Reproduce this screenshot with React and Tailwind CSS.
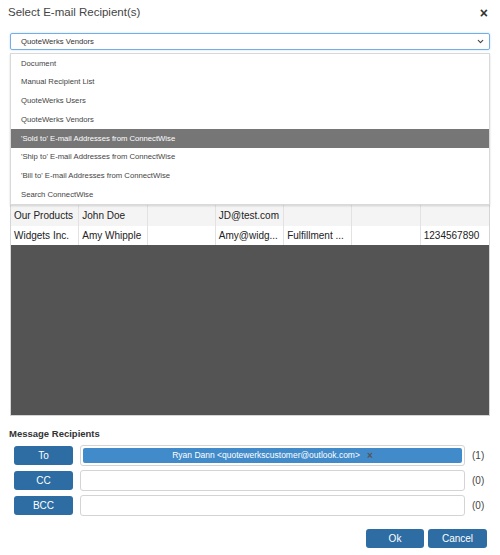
import { ChevronDown } from 'lucide-react'

const options = [
  'Document',
  'Manual Recipient List',
  'QuoteWerks Users',
  'QuoteWerks Vendors',
  "'Sold to' E-mail Addresses from ConnectWise",
  "'Ship to' E-mail Addresses from ConnectWise",
  "'Bill to' E-mail Addresses from ConnectWise",
  'Search ConnectWise',
]

const rows = [
  { cells: ['Our Products', 'John Doe', '', 'JD@test.com', '', '', ''], bg: 'bg-[#f4f4f4]' },
  { cells: ['Widgets Inc.', 'Amy Whipple', '', 'Amy@widg...', 'Fulfillment ...', '', '1234567890'], bg: 'bg-white' },
]

const recipients = [
  { label: 'To', count: '(1)', token: 'Ryan Dann <quotewerkscustomer@outlook.com>' },
  { label: 'CC', count: '(0)' },
  { label: 'BCC', count: '(0)' },
]

export default function App() {
  return (
    <div className="w-[500px] h-[555px] bg-white font-['Liberation_Sans',Arial,sans-serif] text-[#333] relative">
      {/* Header */}
      <div className="flex items-center justify-between h-[24px] pl-[8px] pr-[12px] pt-[1px]">
        <span className="text-[11.5px] text-[#444]">Select E-mail Recipient(s)</span>
        <span className="text-[14px] font-bold text-[#333] leading-none">×</span>
      </div>

      {/* Source select */}
      <div className="px-[10px] pt-[9px]">
        <div className="h-[17px] flex items-center justify-between border border-[#74aee4] rounded-[2px] pl-[10px] pr-[4px] shadow-[0_0_2px_rgba(102,175,233,0.5)]">
          <span className="text-[7.7px] text-[#333]">QuoteWerks Vendors</span>
          <ChevronDown size={9} strokeWidth={3} className="text-[#444]" />
        </div>
      </div>

      {/* Grid area with open dropdown over it */}
      <div className="relative mx-[10px] mt-[3px] h-[363px] border border-[#d5d5d5] bg-[#545454] flex flex-col">
        <div className="h-[150px] bg-white shrink-0" />
        {rows.map((r, i) => (
          <div key={i} className={`grid grid-cols-7 ${r.bg} ${i === 0 ? 'h-[22px] border-t border-[#d8d8d8]' : 'h-[19px]'}`}>
            {r.cells.map((c, j) => (
              <div key={j} className={`flex items-center pl-[3px] text-[10px] text-[#222] whitespace-nowrap overflow-hidden ${j < 6 ? 'border-r border-[#e2e2e2]' : ''}`}>
                {c}
              </div>
            ))}
          </div>
        ))}

        <div className="absolute left-[-1px] right-[-1px] top-[-1px] h-[152px] bg-white border border-[#d9d9d9] shadow-[0_1px_2px_rgba(0,0,0,0.15)] flex flex-col">
          {options.map((o, i) => (
            <div
              key={o}
              className={`h-[18.75px] flex items-center pl-[10px] text-[7.7px] ${
                i === 4 ? 'bg-[#767676] text-white' : 'text-[#444]'
              }`}
            >
              {o}
            </div>
          ))}
        </div>
      </div>

      {/* Message recipients */}
      <div className="pl-[9px] pt-[11px] text-[9.5px] font-bold text-[#333]">Message Recipients</div>
      <div className="flex flex-col gap-[4px] mt-[4px] pl-[14px] pr-[14px]">
        {recipients.map((r) => (
          <div key={r.label} className="flex items-center h-[21px]">
            <button className="w-[59px] h-[19px] bg-[#2d6da3] rounded-[3px] text-white text-[10px] flex items-center justify-center">
              {r.label}
            </button>
            <div className="ml-[7px] w-[385px] h-[21px] border border-[#d4d4d4] rounded-[3px] bg-white p-[2px] flex">
              {r.token && (
                <div className="flex-1 bg-[#428bca] rounded-[2px] flex items-center justify-center text-[8.5px] text-white gap-[7px]">
                  <span>{r.token}</span>
                  <span className="text-[#555] text-[10px] font-bold leading-none">×</span>
                </div>
              )}
            </div>
            <span className="ml-[7px] text-[10px] text-[#444]">{r.count}</span>
          </div>
        ))}
      </div>

      {/* Footer buttons */}
      <div className="flex justify-end gap-[4px] pr-[13px] mt-[13px]">
        <button className="w-[58px] h-[19px] bg-[#2d6da3] rounded-[3px] text-white text-[10px]">Ok</button>
        <button className="w-[59px] h-[19px] bg-[#2d6da3] rounded-[3px] text-white text-[10px]">Cancel</button>
      </div>
    </div>
  )
}
